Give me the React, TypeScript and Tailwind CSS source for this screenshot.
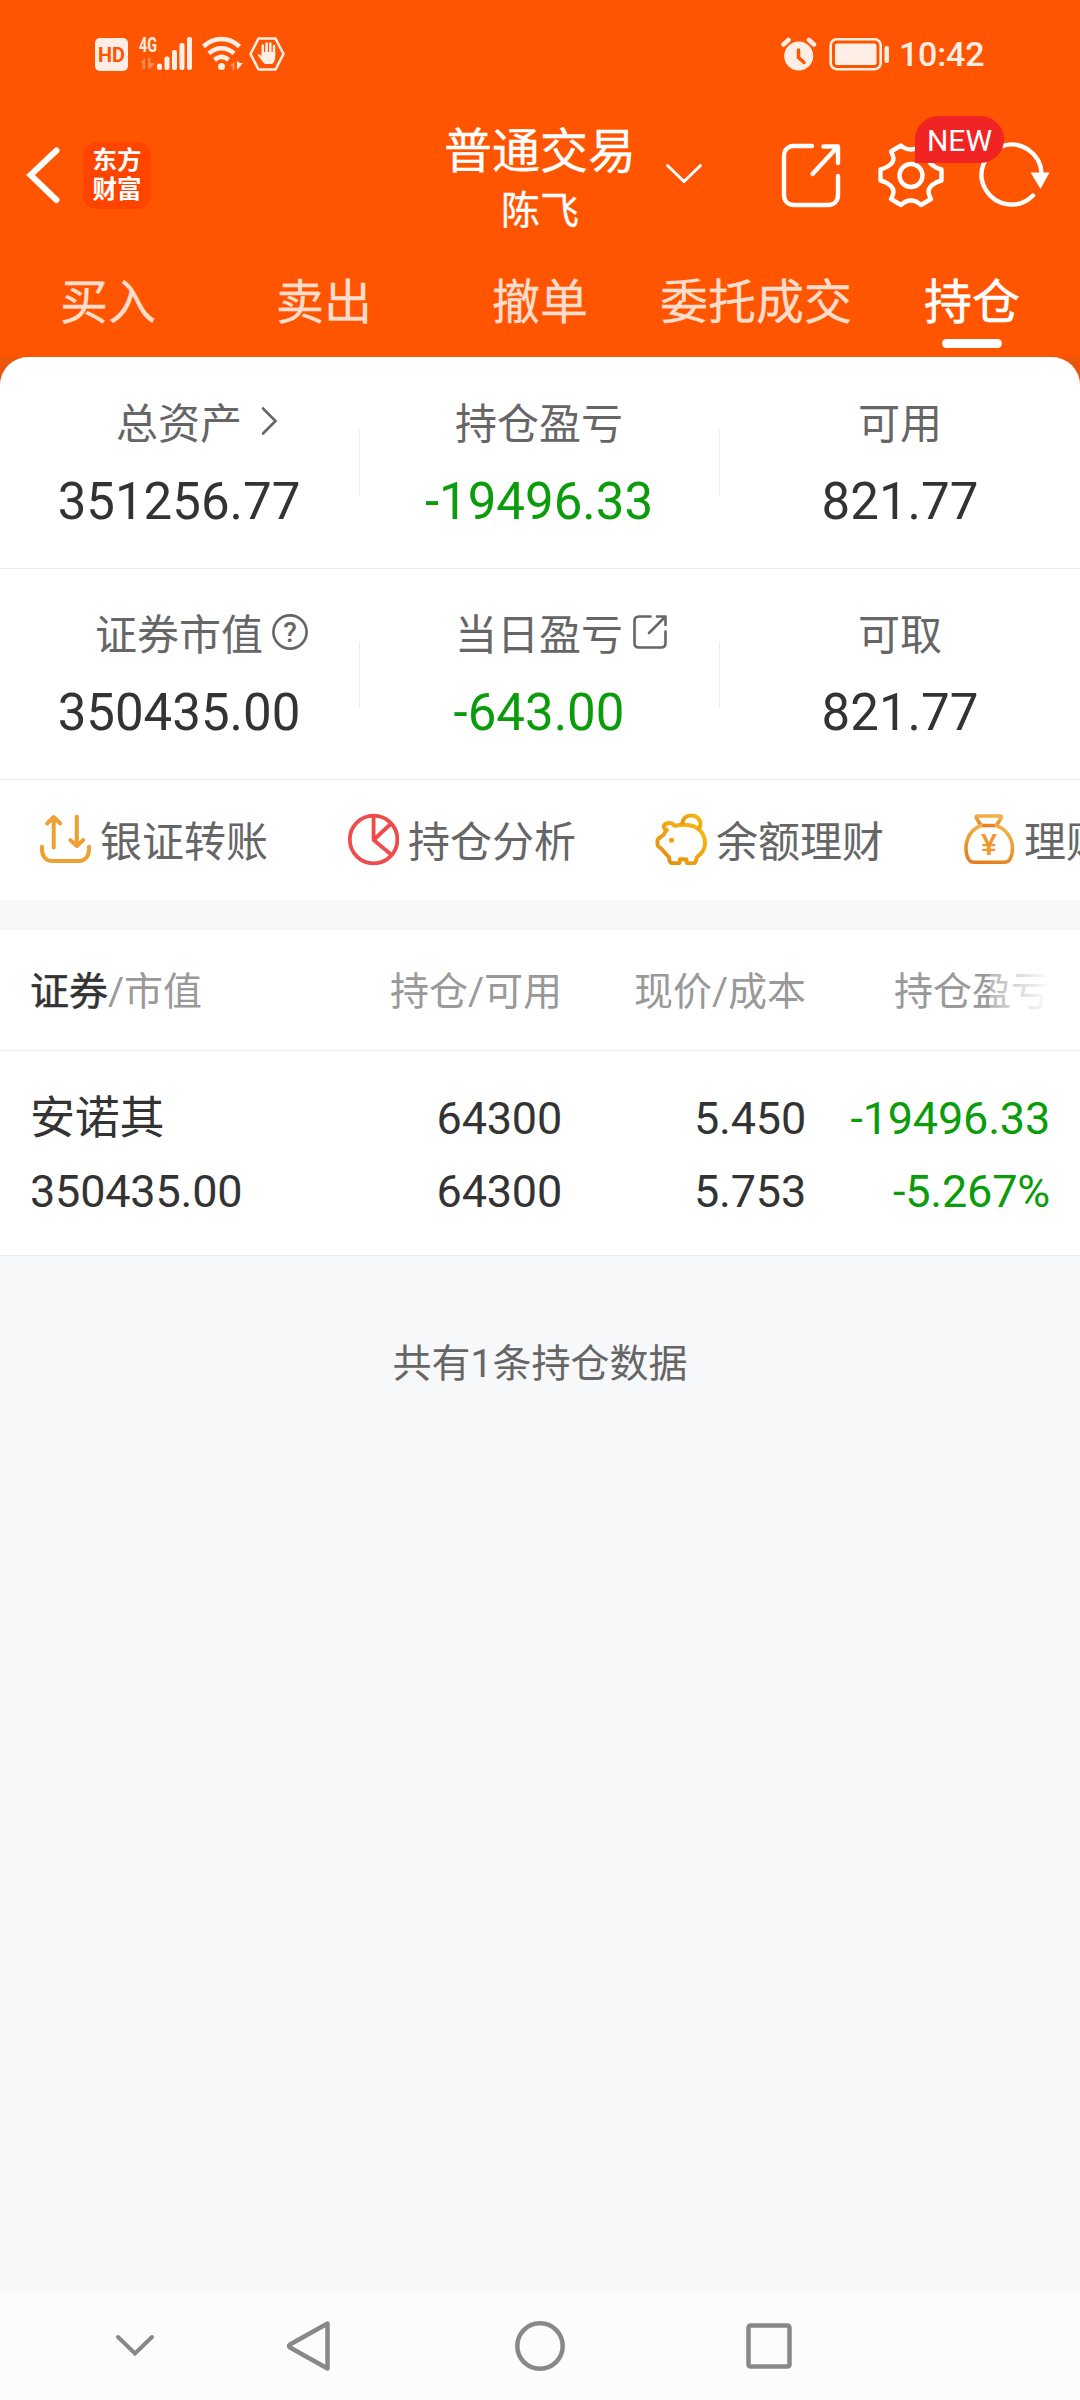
import type { ReactNode } from 'react';

type Stat = { label: string; value: string; down?: boolean; icon?: ReactNode };

const tabs = ['买入', '卖出', '撤单', '委托成交', '持仓'];
const activeTab = '持仓';

function StatusBar() {
  return (
    <div className="flex h-[107px] items-start justify-between pt-[36px] pl-[95px] pr-[96px] text-[#ffeee6]">
      <div className="flex h-[36px] items-center">
        <div className="flex h-[33px] w-[33px] items-center justify-center rounded-[5px] bg-[#ffeee6]">
          <svg width="29" height="29" viewBox="0 0 29 29">
            <text x="1" y="22" textLength="27" lengthAdjust="spacingAndGlyphs" fontFamily="Roboto" fontWeight="700" fontSize="21" fill="#ff5500">HD</text>
          </svg>
        </div>
        <svg className="-mt-[10px] ml-[10px]" width="56" height="46" viewBox="0 -10 56 46" fill="currentColor">
          <text x="1" y="16" textLength="18" lengthAdjust="spacingAndGlyphs" fontFamily="Roboto" fontWeight="700" fontSize="21">4G</text>
          <path d="M2 27l5-5v11H4.500v-6zM10 22h2.500v5H17l-5 6h-2z" opacity="0.35" />
          <rect x="19" y="27.500" width="5" height="6.500" rx="2.500" />
          <rect x="26.500" y="20.500" width="5" height="13.500" rx="2" />
          <rect x="34" y="14" width="5" height="20" rx="2" />
          <rect x="41.500" y="7" width="5" height="27" rx="2" />
          <rect x="49" y="1" width="5" height="33" rx="2" />
        </svg>
        <svg className="ml-[7px]" width="42" height="36" viewBox="0 0 42 36" fill="none" stroke="currentColor" strokeWidth="4.500">
          <path d="M2.500 10.500C13 .5 28 .5 38.500 10.500" />
          <path d="M8 17.500c7.500-7 17.500-7 25 0" />
          <path d="M13.500 24c4.500-4 9.500-4 14 0" />
          <circle cx="20.500" cy="30.500" r="3.500" fill="currentColor" stroke="none" />
          <path d="M36 25v9l6-7h-3z" fill="currentColor" stroke="none" />
          <path d="M33.500 26v8h-2v-4h-3z" fill="currentColor" stroke="none" opacity="0.4" />
        </svg>
        <svg className="ml-[6px]" width="36" height="36" viewBox="0 0 36 36" fill="none" stroke="currentColor" strokeLinejoin="round">
          <path d="M9.500 2.500h17L34.500 18l-8 15.500h-17L1.500 18z" strokeWidth="2.600" />
          <path d="M13.800 19V9.500M17.600 18V7.500M21.300 18V7.500M25 19v-9" strokeWidth="2.500" strokeLinecap="round" />
          <path d="M8.500 18.500c2-1 3 .5 4.200 2V16h13.500v6c0 2.500-1.500 5-3.200 6h-7c-2.500-2-5-6-7.500-9.500z" fill="currentColor" stroke="none" />
        </svg>
      </div>
      <div className="flex h-[36px] items-center">
        <svg width="36" height="36" viewBox="0 0 36 36" fill="none" stroke="currentColor" strokeLinecap="round">
          <circle cx="17.700" cy="20" r="14.500" fill="currentColor" stroke="none" />
          <path d="M2.500 8.500L7.500 4M33 8.500L28 4" strokeWidth="4.500" />
          <path d="M17.500 14v7.500l5.500 5" stroke="#ff5500" strokeWidth="3.500" />
        </svg>
        <svg className="ml-[12px]" width="61" height="36" viewBox="0 0 61 36" fill="none" stroke="currentColor">
          <rect x="1.700" y="3.200" width="50" height="30" rx="6" strokeWidth="2.600" />
          <rect x="6" y="7.500" width="41.500" height="21.500" rx="2" fill="currentColor" stroke="none" />
          <rect x="55.500" y="10" width="4.500" height="17" rx="2" fill="currentColor" stroke="none" />
        </svg>
        <span className="ml-[9px] w-[85px] text-[34px] font-medium leading-[36px] tracking-[-0.2px] whitespace-nowrap">10:42</span>
      </div>
    </div>
  );
}

function Header() {
  return (
    <header className="grid h-[136px] grid-cols-[1fr_auto_1fr] items-center">
      <div className="flex items-center pl-[26px]">
        <svg width="36" height="58" viewBox="0 0 36 58" fill="none" stroke="#fff" strokeWidth="6" strokeLinecap="round">
          <path d="M30.500 4.500L4.500 29l26 25" />
        </svg>
        <div className="ml-[21px] flex h-[67px] w-[68px] flex-col items-center justify-center rounded-[14px] bg-[#ff4400] pb-px text-[24.500px] font-bold leading-[29px] text-white">
          <span>东方</span>
          <span>财富</span>
        </div>
      </div>
      <div className="relative flex flex-col items-center pt-[12px] text-white [-webkit-text-stroke:0.3px_#fff]">
        <h1 className="text-[48px] leading-[60px]">普通交易</h1>
        <p className="text-[39px] leading-[58px]">陈飞</p>
        <svg className="absolute top-[53px] left-[221px]" width="38" height="22" viewBox="0 0 38 22" fill="none" stroke="#fff" strokeWidth="3" strokeLinecap="round">
          <path d="M2.500 2.500L19 18.500 35.500 2.500" />
        </svg>
      </div>
      <div className="flex items-center justify-end pr-[27px] text-white">
        <svg width="60" height="66" viewBox="0 0 60 66" fill="none" stroke="currentColor" strokeWidth="4.400" strokeLinecap="round" strokeLinejoin="round">
          <path d="M31 4H13C7 4 3 8 3 14v39c0 6 4 10 10 10h34c6 0 10-4 10-10V34" />
          <path d="M42.500 4.500H57V21M56 5.500L31.500 32" />
        </svg>
        <div className="relative ml-[37px]">
          <svg width="66" height="66" viewBox="0 0 66 66" fill="none" stroke="currentColor" strokeWidth="4.400" strokeLinejoin="round">
            <path d="M2.500 27.500v11c8 2 13 6.500 13 11.500 0 2.500-1.500 5-2.500 7l10 6c3-3 6-4.500 10-4.500s7 1.500 10 4.500l10-6c-1-2-2.500-4.500-2.500-7 0-5 5-9.500 13-11.500v-11c-8-2-13-6.500-13-11.500 0-2.500 1.500-5 2.500-7l-10-6c-3 3-6 4.500-10 4.500S26 6.500 23 3.500l-10 6c1 2 2.500 4.500 2.500 7C15.500 21 10.500 25.500 2.500 27.500z" />
            <circle cx="33" cy="33.500" r="11.500" />
          </svg>
          <span className="absolute top-[-26px] left-[37px] z-10 flex h-[47px] w-[89px] items-center justify-center rounded-[24px] rounded-bl-none bg-[#f12424] pt-px text-[30px]">
            NEW
          </span>
        </div>
        <svg className="ml-[35px]" width="74" height="66" viewBox="0 0 74 66" fill="none" stroke="currentColor" strokeWidth="4.400" strokeLinecap="round">
          <path d="M62.500 31A30 30 0 1 0 54 53.500" />
          <path d="M51.500 30.500h19L61.500 47z" fill="currentColor" stroke="none" />
        </svg>
      </div>
    </header>
  );
}

function Tabs() {
  return (
    <nav className="grid h-[114px] grid-cols-5 text-center text-[48px] leading-[60px]">
      {tabs.map((tab) => (
        <div
          key={tab}
          className={`flex flex-col items-center pt-[30px] ${tab === activeTab ? 'text-white [-webkit-text-stroke:0.5px_#fff]' : 'text-[#ffddcc] [-webkit-text-stroke:0.3px_#ffddcc]'}`}
        >
          <span className="whitespace-nowrap">{tab}</span>
          {tab === activeTab && <i className="mt-[6px] h-[9px] w-[60px] rounded-full bg-white" />}
        </div>
      ))}
    </nav>
  );
}

const rows: Stat[][] = [
  [
    {
      label: '总资产',
      value: '351256.77',
      icon: (
        <svg className="ml-[18px]" width="18" height="30" viewBox="0 0 18 30" fill="none" stroke="#666" strokeWidth="2.600" strokeLinecap="round">
          <path d="M3 2.500L15.500 15 3 27.500" />
        </svg>
      ),
    },
    { label: '持仓盈亏', value: '-19496.33', down: true },
    { label: '可用', value: '821.77' },
  ],
  [
    {
      label: '证券市值',
      value: '350435.00',
      icon: (
        <svg className="ml-[9px]" width="36" height="36" viewBox="0 0 36 36">
          <circle cx="18" cy="18" r="16.600" fill="none" stroke="#666" strokeWidth="2.600" />
          <text x="18" y="28" textAnchor="middle" fontFamily="Roboto" fontSize="28" fontWeight="500" fill="#666">?</text>
        </svg>
      ),
    },
    {
      label: '当日盈亏',
      value: '-643.00',
      down: true,
      icon: (
        <svg className="ml-[10px]" width="34" height="34" viewBox="0 0 34 34" fill="none" stroke="#666" strokeWidth="2.600" strokeLinecap="round" strokeLinejoin="round">
          <path d="M17.500 1.500H6c-3 0-4.500 1.500-4.500 4.500v22c0 3 1.500 4.500 4.500 4.500h22c3 0 4.500-1.500 4.500-4.500V16.500" />
          <path d="M24 1.500h8.500V10M31.500 2.500L16 18" />
        </svg>
      ),
    },
    { label: '可取', value: '821.77' },
  ],
];

function Summary() {
  return (
    <>
      {rows.map((row, i) => (
        <div key={i} className={`grid grid-cols-3 items-center border-b border-[#ededed] ${i === 0 ? 'h-[212px]' : 'h-[211px]'}`}>
          {row.map((s, j) => (
            <div key={s.label} className={`relative flex flex-col items-center ${i === 0 ? 'pt-px' : ''} ${j < 2 ? 'pr-[2px]' : ''}`}>
              <div className="relative text-[42px] leading-[60px] text-[#666]">
                {s.label}
                {s.icon && <span className="absolute top-0 left-full flex h-[53px] items-center">{s.icon}</span>}
              </div>
              <div className={`mt-[17px] text-[51px] leading-[60px] ${s.down ? 'text-[#0a9c0a]' : 'text-[#333]'}`}>{s.value}</div>
              {j < 2 && <i className="absolute top-[36px] right-0 h-[66px] w-px bg-[#ededed]" />}
            </div>
          ))}
        </div>
      ))}
    </>
  );
}

const shortcuts: { label: string; icon: ReactNode }[] = [
  {
    label: '银证转账',
    icon: (
      <g stroke="#efa035" strokeWidth="4">
        <path d="M3 33.700v3C3 43 7 48 13 48h27c6 0 10-5 10-11.300v-3" />
        <path d="M14.700 34.500V4M8.200 10.500l6.500-6.500 6.500 6.500M37.800 3.500V33M31.300 27l6.500 6 6.500-6" />
      </g>
    ),
  },
  {
    label: '持仓分析',
    icon: (
      <g stroke="#f04a4a" strokeWidth="3.800" strokeLinecap="butt">
        <circle cx="26.600" cy="26.500" r="23.800" />
        <path d="M26.600 3v24l16.500-15.500M26.600 27L43.500 41" />
      </g>
    ),
  },
  {
    label: '余额理财',
    icon: (
      <g stroke="url(#gold)" strokeWidth="4">
        <path d="M9 12.500c1-2.500 6-3 8-2 1.500.5 1.500 2.200 3 2.200 4-.8 10-1.500 16-.2 8.500 2 14 9 14 17.500 0 6-3.500 11-8.300 14.300 0 3-1.500 6-3.500 6h-5.500c-1 0-1.400-2-1.400-4H25c0 2-.6 4-1.600 4h-5.500c-3 0-3.800-3-3.800-6L7.500 37C6 34.500 2.500 34 2.500 31.500v-4c0-2.500 4-3.500 5.800-5.500 1.500-1.500 1.500-3 3.500-5-2-1-3.500-2.500-2.800-4.500z" />
        <path d="M27.500 10C28 5 32 2.500 36.500 2.500c5 0 9 4 9 8.500 0 2-.5 3-1.500 4.500" />
        <circle cx="16.500" cy="27.300" r="2.500" fill="#eda012" stroke="none" />
      </g>
    ),
  },
  {
    label: '理财',
    icon: (
      <g stroke="url(#amber)" strokeWidth="3.600">
        <path d="M14 3h23.500c1.300 0 1 1 .5 2l-4.500 7.500H18L13.500 5c-.5-1-.5-2 .5-2z" />
        <path d="M18 12.500C9 16 3 24.500 3 35c0 6 1.500 10 3.500 12.500C8 49 9 49.200 11 49.200h30c3 0 4.500-.7 6-3 1.500-2.700 2.500-6.200 2.500-11.200 0-10.500-7-19-16-22.500" />
        <text x="26" y="42" textAnchor="middle" fontFamily="Roboto" fontSize="30" fontWeight="500" fill="#f0962a" stroke="none">¥</text>
      </g>
    ),
  },
];

function Shortcuts() {
  return (
    <div className="flex h-[120px] gap-[79px] overflow-hidden pl-[39px]">
      <svg width="0" height="0" className="absolute">
        <defs>
          <linearGradient id="gold" x1="0" y1="1" x2="1" y2="0">
            <stop offset="0" stopColor="#e58a14" />
            <stop offset="1" stopColor="#f7bd10" />
          </linearGradient>
          <linearGradient id="amber" x1="0" y1="1" x2="0.300" y2="0">
            <stop offset="0" stopColor="#e57a1c" />
            <stop offset="1" stopColor="#efb04a" />
          </linearGradient>
        </defs>
      </svg>
      {shortcuts.map((s) => (
        <div key={s.label} className="flex shrink-0 items-center gap-[9px] text-[42px] leading-[60px] text-[#666]">
          <svg className="-mt-[2px]" width="52" height="52" viewBox="0 0 52 52" fill="none" strokeLinecap="round" strokeLinejoin="round">
            {s.icon}
          </svg>
          <span className="pt-[5px] whitespace-nowrap">{s.label}</span>
        </div>
      ))}
    </div>
  );
}

function Holdings() {
  return (
    <section className="bg-white">
      <div className="relative grid h-[121px] grid-cols-[301px_231px_244px_244px] items-center border-b border-[#ededed] px-[30px] pt-[4px] text-right text-[39px] leading-[60px] text-[#999]">
        <div className="text-left">
          <span className="text-[#333] [-webkit-text-stroke:0.5px_#333]">证券</span>/市值
        </div>
        <div>持仓/可用</div>
        <div>现价/成本</div>
        <div>持仓盈亏</div>
        {/* fade hinting that the table scrolls sideways */}
        <i className="absolute top-0 right-[30px] h-[119px] w-[60px] bg-gradient-to-r from-white/30 to-white" />
      </div>
      <div className="grid h-[205px] grid-cols-[301px_231px_244px_244px] content-center border-b border-[#e8eaed] px-[30px] pt-[4px] text-right text-[45px] leading-[73px] tracking-[-0.2px] text-[#333]">
        <div className="text-left">安诺其</div>
        <div>64300</div>
        <div>5.450</div>
        <div className="text-[#0a9c0a]">-19496.33</div>
        <div className="text-left">350435.00</div>
        <div>64300</div>
        <div>5.753</div>
        <div className="text-[#0a9c0a]">-5.267%</div>
      </div>
    </section>
  );
}

function NavBar() {
  return (
    <div className="flex h-[108px] items-center bg-[#fcfcfc] pl-[115px]">
      <svg width="40" height="24" viewBox="0 0 40 24" fill="none" stroke="#888" strokeWidth="4" strokeLinecap="round">
        <path d="M3 3l17 16.500L37 3" />
      </svg>
      <svg className="ml-[131px]" width="46" height="52" viewBox="0 0 46 52" fill="none" stroke="#888" strokeWidth="4.500" strokeLinejoin="round">
        <path d="M41.500 3.500v45L4 27.500q-2-1.500 0-3z" />
      </svg>
      <svg className="ml-[182px]" width="52" height="52" viewBox="0 0 52 52" fill="none" stroke="#888" strokeWidth="4.500">
        <circle cx="26" cy="26" r="22.700" />
      </svg>
      <svg className="ml-[180px]" width="46" height="46" viewBox="0 0 46 46" fill="none" stroke="#888" strokeWidth="4.500">
        <rect x="2.500" y="2.500" width="41" height="41" rx="2" />
      </svg>
    </div>
  );
}

export default function App() {
  return (
    <div lang="zh-CN" className="flex h-[2400px] w-[1080px] flex-col overflow-hidden bg-[#f6f8fa] font-['Roboto','Noto_Sans_CJK_SC',sans-serif]">
      <div className="bg-[#ff5500]">
        <StatusBar />
        <Header />
        <Tabs />
      </div>
      <div className="bg-[linear-gradient(#ec5608_30px,#fff_30px)]">
        <div className="rounded-t-[28px] bg-white">
          <Summary />
          <Shortcuts />
        </div>
      </div>
      <div className="h-[30px] shrink-0" />
      <Holdings />
      <p className="mt-[78px] text-center text-[39px] leading-[60px] text-[#666]">共有1条持仓数据</p>
      <div className="grow" />
      <NavBar />
    </div>
  );
}
